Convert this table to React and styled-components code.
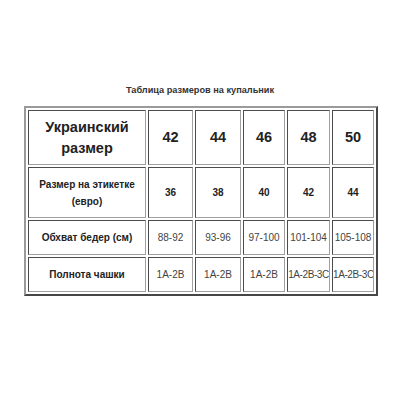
import React from 'react';
import styled, { createGlobalStyle } from 'styled-components';

const GlobalStyle = createGlobalStyle`
  body {
    margin: 0;
    background: #fff;
    font-family: "Liberation Sans", Arial, sans-serif;
    color: #222;
  }
`;

const Page = styled.div`
  width: 400px;
  height: 400px;
  display: flex;
  flex-direction: column;
  align-items: center;
  padding-top: 85px;
  box-sizing: border-box;
`;

const Title = styled.div`
  font-size: 9.2px;
  font-weight: bold;
  color: #333;
  margin-bottom: 11px;
`;

const Table = styled.table`
  width: 354px;
  table-layout: fixed;
  border: 2px outset #9a9a9a;
  border-spacing: 2px;
  margin-left: 2px;
`;

const Cell = styled.td`
  border: 1px inset #a0a0a0;
  text-align: center;
  padding: 0;
  white-space: nowrap;
  overflow: hidden;
  font-size: ${(p) => (p.$big ? '14.5px' : '10px')};
  font-weight: ${(p) => (p.$bold ? 'bold' : 'normal')};
  line-height: ${(p) => (p.$big ? '21px' : '17px')};
  letter-spacing: ${(p) => (p.$tight ? '-0.4px' : 'normal')};
  width: ${(p) => p.$w || 'auto'};
  color: ${(p) => (p.$bold ? '#222' : '#444')};
`;

const Row = styled.tr`
  height: ${(p) => p.$h}px;
`;

const sizes = ['42', '44', '46', '48', '50'];
const euro = ['36', '38', '40', '42', '44'];
const hips = ['88-92', '93-96', '97-100', '101-104', '105-108'];
const cups = ['1A-2B', '1A-2B', '1A-2B', '1A-2B-3C', '1A-2B-3C'];
const widths = ['43px', '44px', '40px', '41px', '40px'];

const App = () => (
  <>
    <GlobalStyle />
    <Page>
      <Title>Таблица размеров на купальник</Title>
      <Table>
        <tbody>
          <Row $h={55}>
            <Cell $big $bold $w="116px">
              Украинский
              <br />
              размер
            </Cell>
            {sizes.map((s, i) => (
              <Cell key={s} $big $bold $w={widths[i]}>
                {s}
              </Cell>
            ))}
          </Row>
          <Row $h={51}>
            <Cell $bold>
              Размер на этикетке
              <br />
              (евро)
            </Cell>
            {euro.map((s, i) => (
              <Cell key={i} $bold>
                {s}
              </Cell>
            ))}
          </Row>
          <Row $h={35}>
            <Cell $bold>Обхват бедер (см)</Cell>
            {hips.map((s) => (
              <Cell key={s}>{s}</Cell>
            ))}
          </Row>
          <Row $h={35}>
            <Cell $bold>Полнота чашки</Cell>
            {cups.map((s, i) => (
              <Cell key={i} $tight={s.length > 6}>
                {s}
              </Cell>
            ))}
          </Row>
        </tbody>
      </Table>
    </Page>
  </>
);

export default App;
